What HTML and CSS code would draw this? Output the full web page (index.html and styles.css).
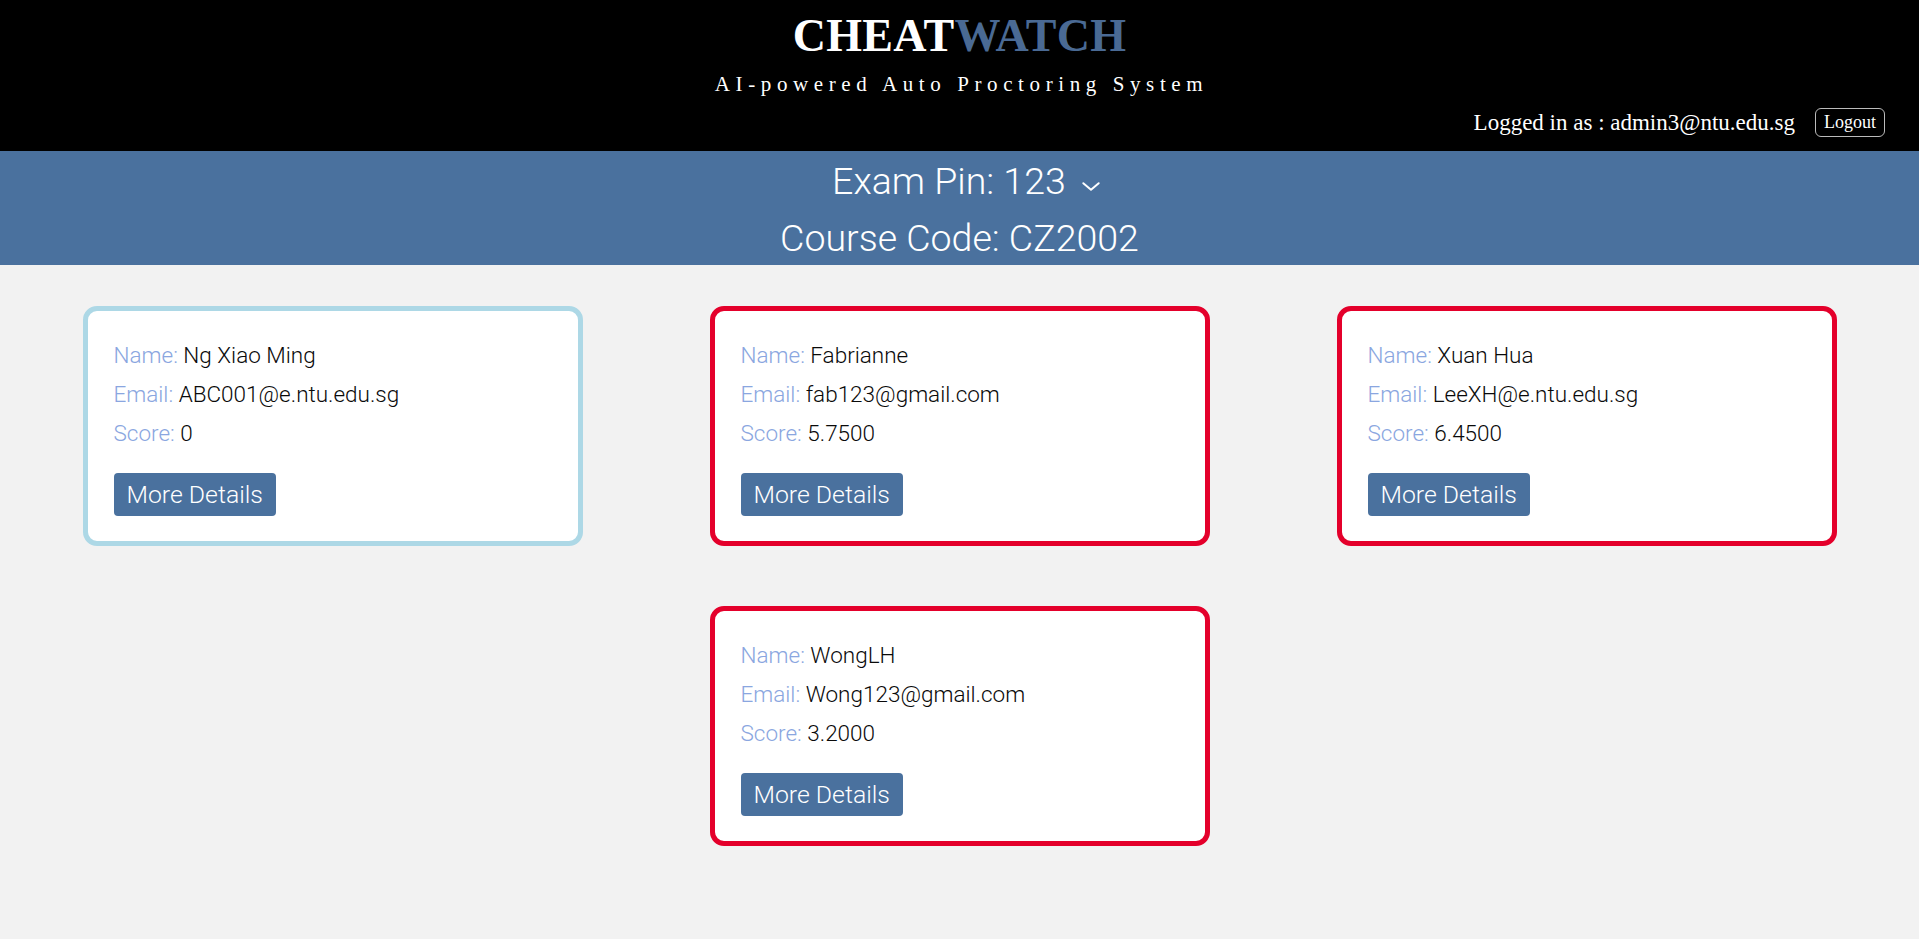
FILE: index.html
```html
<!DOCTYPE html>
<html>
<head>
<meta charset="utf-8">
<title>CheatWatch</title>
<link rel="stylesheet" href="styles.css">
</head>
<body>
<header class="top">
  <div class="brand"><span class="brand-a">CHEAT</span><span class="brand-b">WATCH</span></div>
  <div class="tagline">AI-powered Auto Proctoring System</div>
  <div class="user-row">
    <span class="user">Logged in as : admin3@ntu.edu.sg</span>
    <button class="logout">Logout</button>
  </div>
</header>
<section class="exam">
  <div class="exam-line exam-pin">Exam Pin: 123 <svg class="chev" viewBox="0 0 18 10" width="18" height="10"><path d="M2 2 L9 8 L16 2" fill="none" stroke="#fff" stroke-width="1.8" stroke-linecap="round" stroke-linejoin="round"/></svg></div>
  <div class="exam-line">Course Code: CZ2002</div>
</section>
<main class="cards">
  <div class="card card-ok">
    <div class="row"><span class="lbl">Name:</span> Ng Xiao Ming</div>
    <div class="row"><span class="lbl">Email:</span> ABC001@e.ntu.edu.sg</div>
    <div class="row"><span class="lbl">Score:</span> 0</div>
    <button class="more">More Details</button>
  </div>
  <div class="card card-flag">
    <div class="row"><span class="lbl">Name:</span> Fabrianne</div>
    <div class="row"><span class="lbl">Email:</span> fab123@gmail.com</div>
    <div class="row"><span class="lbl">Score:</span> 5.7500</div>
    <button class="more">More Details</button>
  </div>
  <div class="card card-flag">
    <div class="row"><span class="lbl">Name:</span> Xuan Hua</div>
    <div class="row"><span class="lbl">Email:</span> LeeXH@e.ntu.edu.sg</div>
    <div class="row"><span class="lbl">Score:</span> 6.4500</div>
    <button class="more">More Details</button>
  </div>
  <div class="card card-flag">
    <div class="row"><span class="lbl">Name:</span> WongLH</div>
    <div class="row"><span class="lbl">Email:</span> Wong123@gmail.com</div>
    <div class="row"><span class="lbl">Score:</span> 3.2000</div>
    <button class="more">More Details</button>
  </div>
</main>
</body>
</html>
```
FILE: styles.css
```css
* { box-sizing: border-box; }
html, body { margin: 0; padding: 0; }
body {
  background: #f2f2f2;
  font-family: Roboto, "Noto Sans", sans-serif;
  min-height: 939px;
}
.top {
  background: #000;
  height: 151px;
  display: flex;
  flex-direction: column;
  align-items: center;
  padding-top: 13px;
}
.brand {
  font-family: "Liberation Serif", serif;
  font-weight: bold;
  font-size: 46px;
  line-height: 46px;
  letter-spacing: 0.3px;
}
.brand-a { color: #fff; }
.brand-b { color: #4a6a94; }
.tagline {
  font-family: "Liberation Serif", serif;
  color: #fff;
  font-size: 21px;
  letter-spacing: 5.6px;
  line-height: 26px;
  margin-top: 12px;
  padding-left: 4px;
}
.user-row {
  align-self: flex-end;
  display: flex;
  align-items: center;
  gap: 20px;
  margin-right: 34px;
  margin-top: 11px;
}
.user {
  font-family: "Liberation Serif", serif;
  color: #fff;
  font-size: 23px;
}
.logout {
  font-family: "Liberation Serif", serif;
  background: #000;
  color: #fff;
  border: 1px solid #bbb;
  border-radius: 6px;
  font-size: 18px;
  width: 70px;
  height: 29px;
  padding: 0;
}
.exam {
  background: #4a719e;
  color: #fff;
  height: 114px;
  padding-top: 2px;
  text-align: center;
  font-weight: 300;
  font-size: 37.5px;
  line-height: 57px;
}
.exam-pin { padding-left: 14px; }
.chev { vertical-align: 2px; margin-left: 6px; width: 20px; height: 11px; }
.cards {
  display: flex;
  flex-wrap: wrap;
  justify-content: center;
  column-gap: 127px;
  row-gap: 60px;
  padding-top: 41px;
}
.card {
  width: 500px;
  height: 240px;
  background: #fff;
  border: 5px solid;
  border-radius: 14px;
  padding: 25px 25px 25px 26px;
  font-size: 22.5px;
  font-weight: 300;
  line-height: 39px;
  color: #0a0a0a;
}
.card-ok { border-color: #add8e6; }
.card-flag { border-color: #e4002b; }
.lbl { color: #8aa6e0; }
.more {
  margin-top: 20px;
  display: block;
  height: 43px;
  padding: 0 13px;
  background: #4a719e;
  color: #fff;
  border: none;
  border-radius: 4px;
  font-family: Roboto, sans-serif;
  font-weight: 300;
  font-size: 24.8px;
}
```
